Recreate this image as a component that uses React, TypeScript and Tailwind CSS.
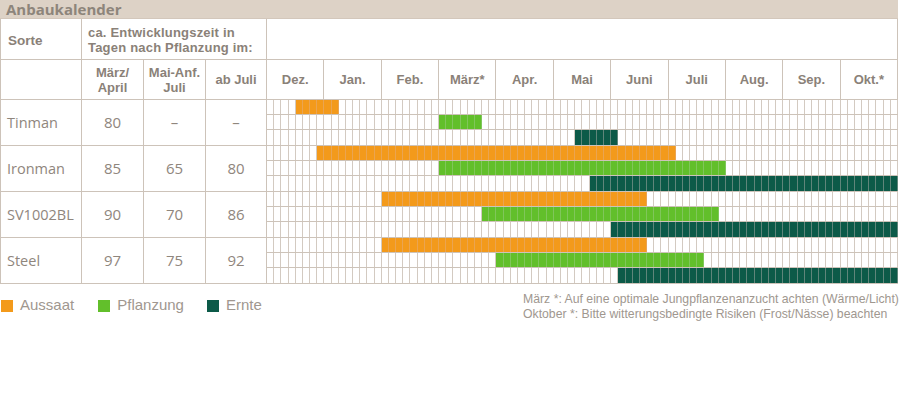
import React from 'react';

// Anbaukalender – Aussaat / Pflanzung / Ernte je Sorte
const months = ['Dez.', 'Jan.', 'Feb.', 'März*', 'Apr.', 'Mai', 'Juni', 'Juli', 'Aug.', 'Sep.', 'Okt.*'];

type Bar = [number, number];

const rows: { name: string; vals: string[]; bars: Bar[] }[] = [
  { name: 'Tinman', vals: ['80', '–', '–'], bars: [[4, 10], [24, 30], [43, 49]] },
  { name: 'Ironman', vals: ['85', '65', '80'], bars: [[7, 57], [24, 64], [45, 88]] },
  { name: 'SV1002BL', vals: ['90', '70', '86'], bars: [[16, 53], [30, 63], [48, 88]] },
  { name: 'Steel', vals: ['97', '75', '92'], bars: [[16, 53], [32, 61], [49, 88]] },
];

// one style per sub-row: Aussaat, Pflanzung, Ernte
const fills = [
  'bg-[#f39a1b] border-[#eaa451]',
  'bg-[#62bf2b] border-[#80c65b]',
  'bg-[#0c5a48] border-[#5f857a]',
];
const subHeights = ['h-[15px]', 'h-[15px]', 'h-[16px]'];

const cols = Array.from({ length: 88 }, (_, i) => i);

function SubRow({ bar, idx }: { bar: Bar; idx: number }) {
  return (
    <div className={`grid grid-cols-[repeat(88,minmax(0,1fr))] border-b border-[#cdc3b9] ${subHeights[idx]}`}>
      {cols.map((c) => {
        const on = c >= bar[0] && c < bar[1];
        return <div key={c} className={`border-r ${on ? fills[idx] : 'border-[#d3cac1]'}`} />;
      })}
    </div>
  );
}

const head = "font-['Liberation_Sans',sans-serif] font-bold text-[13px] leading-[15px]";

export default function App() {
  return (
    <div className="w-[900px] h-[411px] bg-white font-['Open_Sans',sans-serif] text-[#8a8178]">
      <div className="w-[898px] h-[19px] bg-[#ddd2c6] border-b border-[#d3c7bb] pl-[6px] flex items-center">
        <span className="text-[15px] font-bold leading-none text-[#8d857b]">Anbaukalender</span>
      </div>

      <div className={`grid grid-cols-[82px_62px_62px_61px_631px] w-[898px] ${head}`}>
        {/* header row 1 */}
        <div className="h-[41px] border-l border-r border-b border-[#cdc3b9] flex items-center pl-[7px] pt-[3px] text-[13.5px]">
          Sorte
        </div>
        <div className="col-span-3 h-[41px] border-r border-b border-[#cdc3b9] pl-[6px] pt-[6px] tracking-[0.2px]">
          <div>ca. Entwicklungszeit in</div>
          <div>Tagen nach Pflanzung im:</div>
        </div>
        <div className="h-[41px] border-r border-b border-[#cdc3b9]" />

        {/* header row 2 */}
        <div className="h-[40px] border-l border-r border-b border-[#cdc3b9]" />
        <div className="h-[40px] border-r border-b border-[#cdc3b9] flex flex-col items-center justify-center text-center">
          <div>März/</div>
          <div>April</div>
        </div>
        <div className="h-[40px] border-r border-b border-[#cdc3b9] flex flex-col items-center justify-center text-center">
          <div>Mai-Anf.</div>
          <div>Juli</div>
        </div>
        <div className="h-[40px] border-r border-b border-[#cdc3b9] flex items-center justify-center">
          ab Juli
        </div>
        <div className="h-[40px] grid grid-cols-11 border-b border-[#cdc3b9]">
          {months.map((m) => (
            <div key={m} className="border-r border-[#cdc3b9] flex items-center justify-center">
              {m}
            </div>
          ))}
        </div>

        {/* varieties */}
        {rows.map((r) => (
          <React.Fragment key={r.name}>
            <div className="h-[46px] border-l border-r border-b border-[#cdc3b9] flex items-center pl-[6px] font-['Open_Sans',sans-serif] font-normal text-[14.5px] text-[#8f867d]">
              {r.name}
            </div>
            {r.vals.map((v, i) => (
              <div key={i} className="h-[46px] border-r border-b border-[#cdc3b9] flex items-center justify-center font-['Open_Sans',sans-serif] font-normal text-[15px] text-[#8f867d]">
                {v}
              </div>
            ))}
            <div className="flex flex-col">
              {r.bars.map((b, i) => (
                <SubRow key={i} bar={b} idx={i} />
              ))}
            </div>
          </React.Fragment>
        ))}
      </div>

      <div className="w-[898px] flex justify-between pt-[8px]">
        <div className="flex items-center pt-[7px] h-[20px] pl-[1px] font-['Liberation_Sans',sans-serif] text-[15px] text-[#a0978f]">
          <span className="w-[12px] h-[12px] bg-[#f39a1b] mr-[7px]" />
          <span className="mr-[24px]">Aussaat</span>
          <span className="w-[12px] h-[12px] bg-[#62bf2b] mr-[7px]" />
          <span className="mr-[23px]">Pflanzung</span>
          <span className="w-[12px] h-[12px] bg-[#0c5a48] mr-[7px]" />
          <span>Ernte</span>
        </div>
        <div className="w-[375px] font-['Liberation_Sans',sans-serif] text-[12.25px] leading-[15px] text-[#a0978f] whitespace-nowrap">
          <div>März *: Auf eine optimale Jungpflanzenanzucht achten (Wärme/Licht)</div>
          <div>Oktober *: Bitte witterungsbedingte Risiken (Frost/Nässe) beachten</div>
        </div>
      </div>
    </div>
  );
}
